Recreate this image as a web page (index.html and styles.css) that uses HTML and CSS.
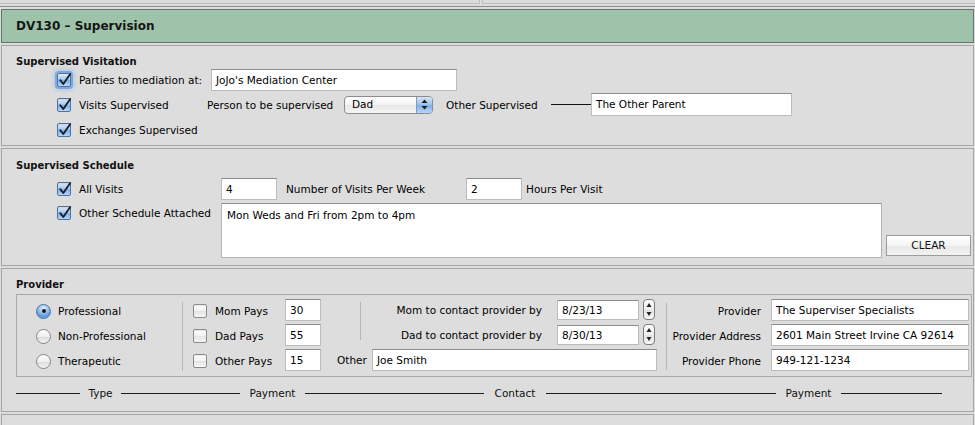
FILE: index.html
```html
<!DOCTYPE html>
<html>
<head>
<meta charset="utf-8">
<title>DV130 - Supervision</title>
<link rel="stylesheet" href="styles.css">
</head>
<body>
<div class="topbar"><div class="tb-cell tb-left"></div><div class="tb-cell tb-right"></div></div>
<div class="rule"></div>
<header class="title-bar"><h1>DV130 – Supervision</h1></header>

<section class="panel p1">
  <h2 class="mbm1">Supervised Visitation</h2>
  <div class="row">
    <span class="cb on focus"><svg viewBox="0 0 14 14"><path d="M3.2 7.2 L6.3 11 L13.2 1"/></svg></span>
    <span class="lbl w132">Parties to mediation at:</span>
    <div class="field w246">JoJo's Mediation Center</div>
  </div>
  <div class="row">
    <span class="cb on"><svg viewBox="0 0 14 14"><path d="M3.2 7.2 L6.3 11 L13.2 1"/></svg></span>
    <span class="lbl w128">Visits Supervised</span>
    <span class="lbl w137">Person to be supervised</span>
    <div class="select"><span class="select-text">Dad</span><span class="select-arrows"><svg viewBox="0 0 7 11"><polygon points="3.5,0.5 6.5,4 0.5,4"/><polygon points="0.5,7 6.5,7 3.5,10.5"/></svg></span></div>
    <span class="lbl w105 ml13">Other Supervised</span>
    <span class="hline w40"></span>
    <div class="field w201 h23">The Other Parent</div>
  </div>
  <div class="row">
    <span class="cb on"><svg viewBox="0 0 14 14"><path d="M3.2 7.2 L6.3 11 L13.2 1"/></svg></span>
    <span class="lbl">Exchanges Supervised</span>
  </div>
</section>

<section class="panel p2">
  <h2 class="mb5">Supervised Schedule</h2>
  <div class="row">
    <span class="cb on"><svg viewBox="0 0 14 14"><path d="M3.2 7.2 L6.3 11 L13.2 1"/></svg></span>
    <span class="lbl w142">All Visits</span>
    <div class="field w56">4</div>
    <span class="lbl w180 ml9">Number of Visits Per Week</span>
    <div class="field w56">2</div>
    <span class="lbl ml4">Hours Per Visit</span>
  </div>
  <div class="row row-top">
    <div class="cbwrap">
      <span class="cb on"><svg viewBox="0 0 14 14"><path d="M3.2 7.2 L6.3 11 L13.2 1"/></svg></span>
      <span class="lbl w142">Other Schedule Attached</span>
    </div>
    <div class="textarea">Mon Weds and Fri from 2pm to 4pm</div>
    <div class="button">CLEAR</div>
  </div>
</section>

<section class="panel p3">
  <h2>Provider</h2>
  <div class="pbox">
    <div class="cell type r1"><span class="radio on"><span class="dot"></span></span><span>Professional</span></div>
    <div class="cell type r2"><span class="radio"></span><span>Non-Professional</span></div>
    <div class="cell type r3"><span class="radio"></span><span>Therapeutic</span></div>

    <div class="vdiv d1"></div>

    <div class="cell pay r1"><span class="cb"></span><span>Mom Pays</span></div>
    <div class="cell pay r2"><span class="cb"></span><span>Dad Pays</span></div>
    <div class="cell pay r3"><span class="cb"></span><span>Other Pays</span></div>
    <div class="field amt r1">30</div>
    <div class="field amt r2">55</div>
    <div class="field amt r3">15</div>

    <div class="cell other r3"><span class="other-lbl">Other</span><div class="field w285">Joe Smith</div></div>

    <div class="vdiv d2"></div>

    <div class="cell clabel r1">Mom to contact provider by</div>
    <div class="cell clabel r2">Dad to contact provider by</div>
    <div class="field date r1">8/23/13</div>
    <div class="field date r2">8/30/13</div>
    <div class="stepper r1"><svg viewBox="0 0 10 19"><polygon points="5,3 7.5,7 2.5,7"/><polygon points="2.5,12 7.5,12 5,16"/></svg></div>
    <div class="stepper r2"><svg viewBox="0 0 10 19"><polygon points="5,3 7.5,7 2.5,7"/><polygon points="2.5,12 7.5,12 5,16"/></svg></div>

    <div class="vdiv d3"></div>

    <div class="cell plabel r1">Provider</div>
    <div class="cell plabel r2">Provider Address</div>
    <div class="cell plabel r3">Provider Phone</div>
    <div class="field prov r1">The Superviser Specialists</div>
    <div class="field prov r2">2601 Main Street Irvine CA 92614</div>
    <div class="field prov r3">949-121-1234</div>
  </div>
  <div class="legend">
    <span class="ln" style="width:64px"></span><span class="lg" style="width:41px">Type</span>
    <span class="ln" style="width:119px"></span><span class="lg" style="width:65px">Payment</span>
    <span class="ln" style="width:179px"></span><span class="lg" style="width:62px">Contact</span>
    <span class="ln" style="width:230px"></span><span class="lg" style="width:65px">Payment</span>
    <span class="ln" style="width:101px"></span>
  </div>
</section>

<section class="panel p4"></section>
</body>
</html>
```

FILE: styles.css
```css
* { box-sizing: border-box; margin: 0; padding: 0; }

body {
  width: 975px;
  height: 425px;
  overflow: hidden;
  background: #dcdcdc;
  font-family: "DejaVu Sans", "Liberation Sans", sans-serif;
  font-size: 10.5px;
  color: #000;
}

/* top strip */
.topbar { display: flex; height: 4px; }
.tb-cell { height: 4px; border-bottom: 1px solid #bdbdbd; }
.tb-left { width: 480px; border-right: 1px solid #bdbdbd; }
.tb-right { flex: 1; margin-left: 2px; border-left: 1px solid #bdbdbd; }
.rule { margin-top: 2px; height: 1px; background: #8e8e8e; }

.title-bar {
  margin: 2px 1px 0;
  height: 34px;
  border: 1px solid #66736a;
  background: #9ec3aa;
  padding-left: 14px;
}
.title-bar h1 {
  font-size: 12px;
  font-weight: bold;
  line-height: 33px;
  color: #151515;
}

/* panels */
.panel {
  margin: 2px 1px 0;
  border: 1px solid #a6a6a6;
  background: #dddddd;
  padding-left: 14px;
}
.panel h2 {
  font-size: 10px;
  font-weight: bold;
  line-height: 12px;
  color: #111;
}
.p1 { height: 101px; padding-top: 10px; }
.p2 { height: 118px; padding-top: 11px; }
.p3 { height: 144px; padding-top: 10px; }
.p4 { height: 20px; }
.mb5 { margin-bottom: 4px; }
.mbm1 { margin-bottom: -1px; }

.row {
  display: flex;
  align-items: center;
  height: 25px;
  margin-left: 41px;
  white-space: nowrap;
}
.row-top { align-items: flex-start; height: 55px; margin-top: 2px; }
.cbwrap { display: flex; align-items: center; height: 20px; }

.lbl { display: inline-block; white-space: nowrap; }
.w105 { width: 105px; }
.w128 { width: 128px; }
.w132 { width: 132px; }
.w137 { width: 137px; }
.w142 { width: 142px; }
.w180 { width: 180px; }
.w40 { width: 40px; }
.ml4 { margin-left: 4px; }
.ml9 { margin-left: 9px; }
.ml13 { margin-left: 13px; }

.hline { height: 1px; background: #111; }

/* checkbox */
.cb {
  width: 14px;
  height: 14px;
  flex: none;
  margin-right: 8px;
  border: 1px solid #8a8a8a;
  border-radius: 2px;
  background: linear-gradient(#ffffff, #f1f1f1 50%, #e3e3e3 51%, #f7f7f7);
  box-shadow: inset 0 1px 1px rgba(0,0,0,0.08);
  display: flex;
}
.cb.on {
  border-color: #4d72a3;
  background: linear-gradient(#dcebfa, #a9cbef 45%, #7fb0e5 55%, #b7d6f6);
}
.cb svg { width: 14px; height: 14px; margin: -1px 0 0 -1px; overflow: visible; }
.cb path { fill: none; stroke: #17212e; stroke-width: 1.9; stroke-linecap: round; stroke-linejoin: round; }
.cb.focus { box-shadow: 0 0 0 2px rgba(110,158,222,0.75), 0 0 4px 3px rgba(110,158,222,0.45); }

/* text field */
.field {
  height: 22px;
  flex: none;
  background: #fff;
  border: 1px solid #bcbcbc;
  border-top-color: #8c8c8c;
  padding: 0 4px;
  line-height: 20px;
  white-space: nowrap;
  overflow: hidden;
}
.w56 { width: 56px; }
.w201 { width: 201px; }
.w246 { width: 246px; }
.w285 { width: 285px; }
.h23 { height: 23px; line-height: 21px; }

/* popup */
.select {
  width: 89px;
  height: 18px;
  flex: none;
  display: flex;
  border: 1px solid #8d8d8d;
  border-radius: 4px;
  overflow: hidden;
  background: linear-gradient(#ffffff, #f3f3f3 50%, #e6e6e6 51%, #f6f6f6);
}
.select-text { flex: 1; padding-left: 7px; line-height: 15px; }
.select-arrows {
  width: 16px;
  display: flex;
  align-items: center;
  justify-content: center;
  border-left: 1px solid #7f9cc4;
  background: linear-gradient(#d3e4f7, #9fc3ee 48%, #7eaee6 52%, #b9d6f6);
}
.select-arrows svg { width: 7px; height: 11px; }
.select-arrows polygon { fill: #1b1b1b; }

.textarea {
  width: 661px;
  height: 55px;
  flex: none;
  background: #fff;
  border: 1px solid #b4b4b4;
  border-top-color: #8f8f8f;
  padding: 5px 5px;
  line-height: 12px;
}
.button {
  width: 85px;
  height: 21px;
  margin: 0 0 2px 4px;
  align-self: flex-end;
  border: 1px solid #9b9b9b;
  background: linear-gradient(#ffffff, #f4f4f4 50%, #e8e8e8 51%, #f2f2f2);
  text-align: center;
  line-height: 19px;
  color: #111;
}

/* provider grid */
.pbox {
  margin-top: 3px;
  width: 956px;
  height: 83px;
  border: 1px solid #a9a9a9;
  padding: 4px 2px 1px 0;
  display: grid;
  grid-template-columns: 165px 1px 102px 36px 39px 1px 196px 82px 27px 1px 104px 198px;
  grid-template-rows: repeat(3, 25px);
  white-space: nowrap;
}
.r1 { grid-row: 1; }
.r2 { grid-row: 2; }
.r3 { grid-row: 3; }
.cell { display: flex; align-items: center; }
.type { grid-column: 1; padding-left: 19px; padding-bottom: 1px; }
.pay { grid-column: 3; padding-left: 10px; padding-bottom: 2px; }
.amt { grid-column: 4; align-self: start; }
.other { grid-column: 5 / 10; padding-left: 16px; align-items: flex-start; }
.other-lbl { width: 35px; line-height: 22px; }
.clabel { grid-column: 7; justify-content: flex-end; padding-right: 15px; padding-bottom: 4px; }
.date { grid-column: 8; height: 20px; line-height: 18px; margin-top: 1px; align-self: start; }
.stepper {
  grid-column: 9;
  align-self: start;
  width: 12px;
  height: 21px;
  margin-left: 4px;
  border: 1px solid #7b7b7b;
  border-radius: 4px;
  background: linear-gradient(#ffffff, #eeeeee 50%, #e2e2e2 51%, #f6f6f6);
  display: flex;
}
.stepper svg { width: 10px; height: 19px; }
.stepper polygon { fill: #222; }
.plabel { grid-column: 11; justify-content: flex-end; padding-right: 10px; padding-bottom: 1px; }
.prov { grid-column: 12; align-self: start; }

.vdiv { background: #b6b6b6; width: 1px; }
.d1 { grid-column: 2; grid-row: 1 / 4; margin: 3px 0 3px; }
.d2 { grid-column: 6; grid-row: 1 / 3; margin: 3px 0 9px; }
.d3 { grid-column: 10; grid-row: 1 / 4; margin: 4px 0 4px; }

/* radio */
.radio {
  width: 15px;
  height: 15px;
  flex: none;
  margin-right: 7px;
  border-radius: 50%;
  border: 1px solid #858585;
  background: linear-gradient(#ffffff, #f0f0f0 50%, #dcdcdc 55%, #f5f5f5);
  display: flex;
  align-items: center;
  justify-content: center;
}
.radio.on {
  border-color: #4c6e9c;
  background: radial-gradient(circle at 50% 25%, #e1eefb 0, #9cc2ee 40%, #5e98dc 70%, #8ab8ec 100%);
}
.dot { width: 4px; height: 4px; border-radius: 50%; background: #1a1a1a; }

/* legend row */
.legend {
  display: flex;
  align-items: center;
  height: 12px;
  margin-top: 10px;
}
.ln { height: 1px; background: #1c1c1c; }
.lg { text-align: center; line-height: 12px; color: #111; }
```
